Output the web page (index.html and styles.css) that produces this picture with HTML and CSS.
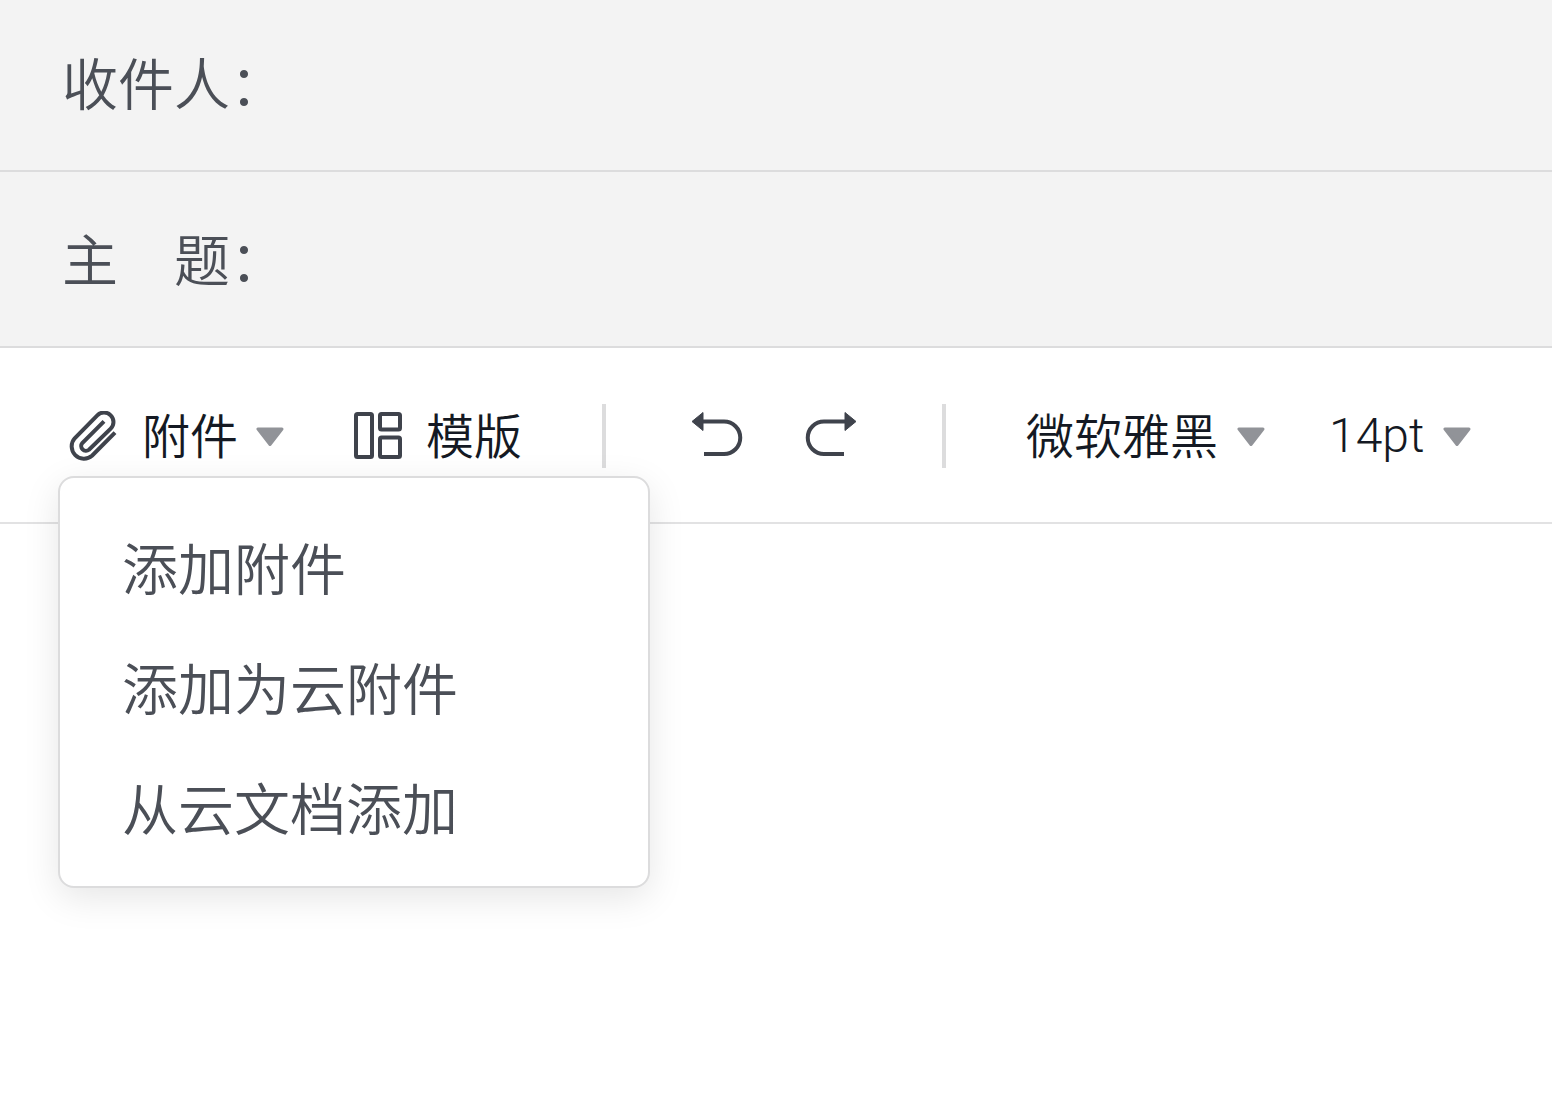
FILE: index.html
```html
<!DOCTYPE html>
<html lang="zh-CN">
  <head>
    <meta charset="UTF-8" />
    <meta name="viewport" content="width=device-width, initial-scale=1.0" />
    <title>写邮件</title>
    <link rel="stylesheet" href="styles.css">
  </head>
  <body>
    <form class="compose">
      <div class="field field-first">
        <label for="to">收件人：</label>
        <input type="text" id="to" />
      </div>
      <div class="field">
        <label for="subject">主　题：</label>
        <input type="text" id="subject" />
      </div>

      <div class="toolbar">
        <div class="dropdown">
          <button type="button" class="tool" aria-haspopup="true" aria-expanded="true">
            <svg class="icon" width="50" height="50" viewBox="0 0 50 50">
              <path d="M47 21.7 24 44.7A12.3 12.3 0 0 1 6.7 27.3L29.3 4.3A9.4 9.4 0 0 1 42.7 17.7L21 38.8A4.8 4.8 0 0 1 14.3 32L36 10.3" />
            </svg>
            <span class="tool-text">附件</span>
            <svg class="caret" width="28" height="20" viewBox="0 0 28 20">
              <path d="M2 3H26L14 18.5Z" />
            </svg>
          </button>
          <div class="menu">
            <button type="button" class="menu-item">添加附件</button>
            <button type="button" class="menu-item">添加为云附件</button>
            <button type="button" class="menu-item">从云文档添加</button>
          </div>
        </div>

        <button type="button" class="tool template">
          <svg class="icon" width="48" height="48" viewBox="0 0 48 48">
            <rect x="2" y="2" width="16" height="43" rx="1.5" />
            <rect x="26" y="2" width="20" height="15.5" rx="1.5" />
            <rect x="26" y="25.5" width="20" height="19.5" rx="1.5" />
          </svg>
          <span class="tool-text">模版</span>
        </button>

        <span class="divider"></span>

        <div class="history">
          <button type="button" class="tool" aria-label="撤销">
            <svg class="icon" width="52" height="48" viewBox="0 0 52 48">
              <path d="M12 9.5H33A16.25 16.25 0 0 1 33 42H13" />
              <path class="head" d="M1 9.5 12 .5V18.5Z" />
            </svg>
          </button>
          <button type="button" class="tool" aria-label="重做">
            <svg class="icon" width="52" height="48" viewBox="0 0 52 48">
              <path d="M40 9.5H19A16.25 16.25 0 0 0 19 42H39" />
              <path class="head" d="M51 9.5 40 .5V18.5Z" />
            </svg>
          </button>
        </div>

        <span class="divider"></span>

        <div class="picker font">
          <select aria-label="字体">
            <option>微软雅黑</option>
          </select>
          <svg class="caret" width="28" height="20" viewBox="0 0 28 20">
            <path d="M2 3H26L14 18.5Z" />
          </svg>
        </div>
        <div class="picker size">
          <select aria-label="字号">
            <option>14pt</option>
          </select>
          <svg class="caret" width="28" height="20" viewBox="0 0 28 20">
            <path d="M2 3H26L14 18.5Z" />
          </svg>
        </div>
      </div>

      <textarea class="editor" aria-label="正文"></textarea>
    </form>
  </body>
</html>
```
FILE: styles.css
```css
* {
  margin: 0;
  padding: 0;
  box-sizing: border-box;
}

body {
  background-color: #ffffff;
  color: #4b4f57;
  font-family: "Noto Sans CJK SC", sans-serif;
  font-weight: 350;
}

button,
input,
select,
textarea {
  border: none;
  outline: none;
  background: none;
  color: inherit;
  font: inherit;
}

.compose {
  display: flex;
  flex-direction: column;
  min-height: 100vh;
}

/* Recipient and subject */
.field {
  display: flex;
  align-items: center;
  height: 176px;
  padding: 0 62px 4px;
  border-bottom: 2px solid #dcdcdd;
  background-color: #f3f3f3;
  font-size: 56px;
  line-height: 84px;
}

.field-first {
  height: 172px;
  padding-bottom: 8px;
}

.field label {
  flex: none;
}

.field input {
  flex: 1;
  min-width: 0;
}

/* Toolbar */
.toolbar {
  display: flex;
  align-items: center;
  height: 176px;
  padding: 2px 68px 0;
  border-bottom: 2px solid #e2e2e3;
  color: #141923;
  font-size: 48px;
  line-height: 72px;
  white-space: nowrap;
}

.tool {
  display: flex;
  align-items: center;
  cursor: pointer;
}

.tool-text {
  margin-left: 24px;
  padding-bottom: 6px;
}

.icon {
  flex: none;
  fill: none;
  stroke: #3f434c;
  stroke-width: 4;
}

.icon .head {
  fill: #3f434c;
  stroke-width: 1;
  stroke-linejoin: round;
}

.caret {
  flex: none;
  margin-left: 18px;
  fill: #919398;
  stroke: #919398;
  stroke-width: 3;
  stroke-linejoin: round;
  pointer-events: none;
}

.template {
  margin-left: 70px;
}

.divider {
  width: 4px;
  height: 64px;
  margin: 0 80px;
  background-color: #dcdcdd;
}

.history {
  display: flex;
  gap: 62px;
  padding: 0 5px;
}

.picker {
  display: flex;
  align-items: center;
}

.picker select {
  appearance: none;
  height: 78px;
  padding-bottom: 6px;
  cursor: pointer;
}

.size {
  margin-left: 64px;
}

.picker.size select {
  padding-bottom: 0;
  font-family: Roboto, sans-serif;
  font-weight: 300;
}

/* Attachment menu */
.dropdown {
  position: relative;
}

.menu {
  position: absolute;
  top: 79px;
  left: -10px;
  z-index: 10;
  width: 592px;
  padding: 28px 0 20px;
  border: 2px solid #dcdcdd;
  border-radius: 16px;
  background-color: #ffffff;
  box-shadow: 0 10px 36px rgba(0, 0, 0, 0.1);
  color: #4b4f57;
}

.menu-item {
  display: block;
  width: 100%;
  height: 120px;
  padding: 0 62px;
  font-size: 56px;
  line-height: 84px;
  text-align: left;
  cursor: pointer;
}

.menu-item:hover {
  background-color: #f3f3f3;
}

.editor {
  flex: 1;
  padding: 40px 62px;
  font-size: 48px;
  resize: none;
}
```
